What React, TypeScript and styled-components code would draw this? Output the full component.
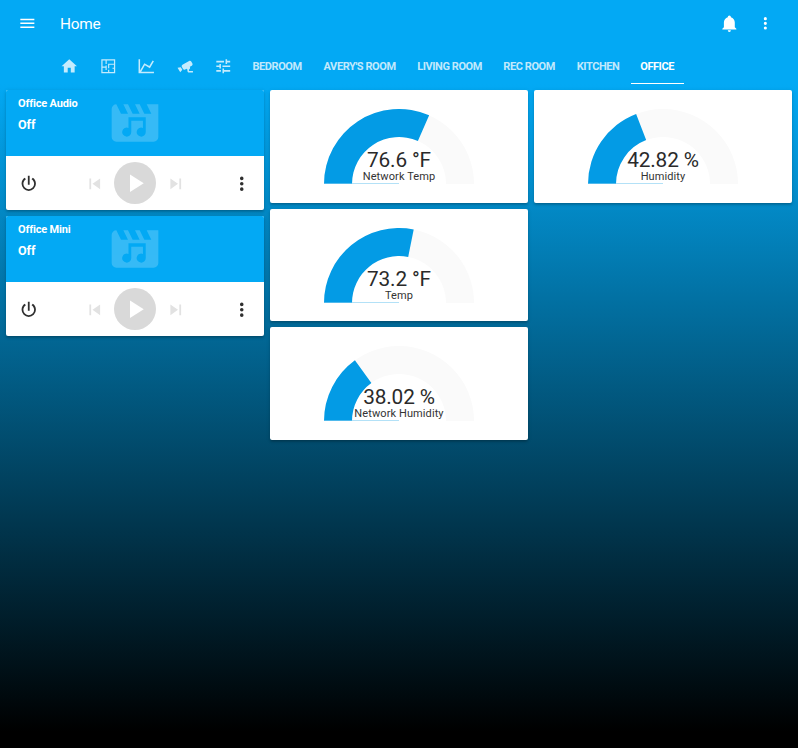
import React from "react";
import styled, { createGlobalStyle } from "styled-components";

const GlobalStyle = createGlobalStyle`
  * { box-sizing: border-box; }
  html, body { margin: 0; height: 100%; }
  body { font-family: Roboto, "Liberation Sans", sans-serif; overflow: hidden; background: #03a9f4; }
  button { border: 0; padding: 0; background: none; font: inherit; color: inherit; }
`;

const icons = {
  menu: "M3,6H21V8H3V6M3,11H21V13H3V11M3,16H21V18H3V16Z",
  bell: "M21,19V20H3V19L5,17V11C5,7.9 7.03,5.17 10,4.29C10,4.19 10,4.1 10,4A2,2 0 0,1 12,2A2,2 0 0,1 14,4C14,4.1 14,4.19 14,4.29C16.97,5.17 19,7.9 19,11V17L21,19M14,21A2,2 0 0,1 12,23A2,2 0 0,1 10,21",
  dots: "M12,16A2,2 0 0,1 14,18A2,2 0 0,1 12,20A2,2 0 0,1 10,18A2,2 0 0,1 12,16M12,10A2,2 0 0,1 14,12A2,2 0 0,1 12,14A2,2 0 0,1 10,12A2,2 0 0,1 12,10M12,4A2,2 0 0,1 14,6A2,2 0 0,1 12,8A2,2 0 0,1 10,6A2,2 0 0,1 12,4Z",
  home: "M10,20V14H14V20H19V12H22L12,3L2,12H5V20H10Z",
  floorPlan: "M3,3H21V21H3V3M4.6,4.6V12.4H8.5V11H10V17H8.5V14H4.6V19.4H11.8V16.5H13.3V19.4H19.4V15.4H17.5V13.9H19.4V10.2H13.3V14.5H11.8V8.7H19.4V4.6H10V9H8.5V4.6H4.6Z",
  chart: "M16,11.78L20.24,4.45L21.97,5.45L16.74,14.5L10.23,10.75L5.46,19H22V21H2V3H4V17.54L9.5,8L16,11.78Z",
  cctv: "M18.15,4.94C17.77,4.91 17.37,5 17,5.2L8.35,10.2C7.39,10.76 7.07,12 7.62,12.94L9.12,15.53C9.67,16.5 10.89,16.82 11.85,16.27L13.65,15.23C13.92,15.69 14.32,16.06 14.81,16.27V18.04C14.81,19.13 15.7,20 16.81,20H22V18.04H16.81V16.27C17.72,15.87 18.31,14.97 18.31,14C18.31,13.54 18.19,13.11 17.97,12.73L20.5,11.27C21.47,10.71 21.8,9.5 21.24,8.53L19.74,5.94C19.4,5.34 18.79,5 18.15,4.94M6.22,13.17L2,13.87L2.75,15.17L4.75,18.63L5.5,19.93L8.22,16.63L6.22,13.17Z",
  tune: "M3,17V19H9V17H3M3,5V7H13V5H3M13,21V19H21V17H13V15H11V21H13M7,9V11H3V13H7V15H9V9H7M21,13V11H11V13H21M15,9H17V7H21V5H17V3H15V9Z",
  power: "M16.56,5.44L15.11,6.89C16.84,7.94 18,9.83 18,12A6,6 0 0,1 12,18A6,6 0 0,1 6,12C6,9.83 7.16,7.94 8.88,6.88L7.44,5.44C5.36,6.88 4,9.28 4,12A8,8 0 0,0 12,20A8,8 0 0,0 20,12C20,9.28 18.64,6.88 16.56,5.44M13,3H11V13H13",
  previous: "M6,18V6H8V18H6M9.5,12L18,6V18L9.5,12Z",
  next: "M16,18H18V6H16M6,18L14.5,12L6,6V18Z",
  play: "M8,5.14V19.14L19,12.14L8,5.14Z",
  movieMusic:
    "M4,4L6,8H9L7,4H9L11,8H14L12,4H14L16,8H19L17,4H22V18A2,2 0 0,1 20,20H4A2,2 0 0,1 2,18V6A2,2 0 0,1 4,4Z" +
    "M9.2,9.5V14.1A1.95,1.95 0 1,0 10.4,15.9V11H15.4V14.1A1.95,1.95 0 1,0 16.6,15.9V9.5H9.2Z",
};

const Svg = styled.svg<{ $size: number }>`
  display: block;
  flex: none;
  width: ${(p) => p.$size}px;
  height: ${(p) => p.$size}px;
  fill: currentColor;
  fill-rule: evenodd;
`;

function Icon({ name, size }: { name: keyof typeof icons; size: number }) {
  return (
    <Svg $size={size} viewBox="0 0 24 24">
      <path d={icons[name]} />
    </Svg>
  );
}

const Page = styled.div`
  height: 748px;
  display: flex;
  flex-direction: column;
`;

const Header = styled.header`
  height: 84px;
  flex: none;
  color: #fff;
  background: #03a9f4;
`;

const Toolbar = styled.div`
  height: 48px;
  display: flex;
  align-items: center;
  padding: 0 23.4px 0.4px 17.6px;
`;

const Title = styled.h1`
  flex: 1;
  margin: 0 0 0 23.6px;
  font-size: 15.4px;
  font-weight: 400;
  line-height: 20px;
  letter-spacing: -0.2px;
`;

const Actions = styled.div`
  display: flex;
  gap: 17.4px;
`;

const Tabs = styled.nav`
  height: 36px;
  display: flex;
  padding-left: 50px;
`;

const Tab = styled.button<{ $width: number; $active?: boolean }>`
  width: ${(p) => p.$width}px;
  flex: none;
  display: flex;
  align-items: center;
  justify-content: center;
  padding-top: 1.4px;
  white-space: nowrap;
  font-size: 11px;
  font-weight: 700;
  letter-spacing: -0.42px;
  border-bottom: 1px solid ${(p) => (p.$active ? "#fff" : "transparent")};
  color: ${(p) => (p.$active ? "#fff" : "rgba(255, 255, 255, 0.77)")};
`;

const RoomTab = styled(Tab)`
  padding-right: 0.8px;
`;

const View = styled.main`
  flex: 1;
  display: grid;
  grid-template-columns: repeat(3, 258px);
  gap: 6px;
  align-items: start;
  padding: 6px;
  background: linear-gradient(to bottom, #03a9f4, #000 97.5%);
`;

const Column = styled.div`
  display: flex;
  flex-direction: column;
  gap: 6px;
`;

const Card = styled.section`
  background: #fff;
  border-radius: 2px;
  overflow: hidden;
  box-shadow: 0 2px 2px rgba(0, 0, 0, 0.14), 0 1px 4px rgba(0, 0, 0, 0.12), 0 2px 1px -2px rgba(0, 0, 0, 0.2);
`;

const MediaBanner = styled.div`
  height: 66px;
  display: grid;
  grid-template-columns: 1fr 56px 1fr;
  background: #03a9f4;
  color: #fff;
`;

const MediaText = styled.div`
  padding: 6px 0 0 12px;
  font-weight: 700;
`;

const MediaName = styled.div`
  font-size: 11px;
  line-height: 16px;
  letter-spacing: -0.18px;
  white-space: nowrap;
`;

const MediaState = styled.div`
  margin-top: 4px;
  font-size: 12.5px;
  line-height: 18px;
`;

const MediaArt = styled.div`
  padding: 4.6px 0 0 0.3px;
  opacity: 0.2;
`;

const Controls = styled.div`
  height: 54px;
  display: flex;
  align-items: center;
  justify-content: space-between;
  padding: 0 12px;
  color: #303030;
`;

const ControlButton = styled.button`
  padding-top: 1.2px;
`;

const Transport = styled.div`
  display: flex;
  align-items: center;
  gap: 9px;
  color: #e2e2e2;
`;

const PlayButton = styled.button`
  width: 42px;
  height: 42px;
  display: grid;
  place-items: center;
  border-radius: 50%;
  background: #d9d9d9;
  color: #fff;
`;

const GaugeCard = styled(Card)`
  height: 112.6px;
  display: flex;
  flex-direction: column;
  align-items: center;
  padding-top: 18.95px;
`;

const Dial = styled.svg`
  display: block;
  flex: none;
  width: 150px;
  height: 75px;
`;

const Reading = styled.div`
  margin-top: -33.9px;
  text-align: center;
  color: #2a2a2a;
`;

const Value = styled.div`
  font-size: 20.8px;
  font-weight: 400;
  line-height: 20px;
  letter-spacing: -0.15px;
`;

const Label = styled.div`
  font-size: 11px;
  line-height: 14px;
  letter-spacing: 0.1px;
  color: #333;
`;

function arc(degrees: number) {
  const t = (degrees * Math.PI) / 180;
  const c = Math.cos(t);
  const s = Math.sin(t);
  return `M0,75A75,75 0 0,1 ${75 - 75 * c},${75 - 75 * s}L${75 - 47 * c},${75 - 47 * s}A47,47 0 0,0 28,75Z`;
}

function Gauge({ value, label, degrees }: { value: string; label: string; degrees: number }) {
  return (
    <GaugeCard>
      <Dial viewBox="0 0 150 75">
        <path d={arc(180)} fill="#fafafa" />
        <path d={arc(degrees)} fill="#039be5" />
        <rect x="0" y="74" width="75" height="1" fill="#b3e1f7" />
        <rect x="0" y="74" width="28" height="1" fill="#4fb9ec" />
      </Dial>
      <Reading>
        <Value>{value}</Value>
        <Label>{label}</Label>
      </Reading>
    </GaugeCard>
  );
}

function MediaPlayer({ name }: { name: string }) {
  return (
    <Card>
      <MediaBanner>
        <MediaText>
          <MediaName>{name}</MediaName>
          <MediaState>Off</MediaState>
        </MediaText>
        <MediaArt><Icon name="movieMusic" size={56} /></MediaArt>
      </MediaBanner>
      <Controls>
        <ControlButton aria-label="Power"><Icon name="power" size={21.5} /></ControlButton>
        <Transport>
          <ControlButton aria-label="Previous"><Icon name="previous" size={21.5} /></ControlButton>
          <PlayButton aria-label="Play"><Icon name="play" size={30} /></PlayButton>
          <ControlButton aria-label="Next"><Icon name="next" size={21.5} /></ControlButton>
        </Transport>
        <ControlButton aria-label="More"><Icon name="dots" size={21.5} /></ControlButton>
      </Controls>
    </Card>
  );
}

const iconTabs = [
  { icon: "home", width: 38 },
  { icon: "floorPlan", width: 40 },
  { icon: "chart", width: 37 },
  { icon: "cctv", width: 40 },
  { icon: "tune", width: 37 },
] as const;

const roomTabs = [
  { label: "BEDROOM", width: 71 },
  { label: "AVERY'S ROOM", width: 94 },
  { label: "LIVING ROOM", width: 86 },
  { label: "REC ROOM", width: 73 },
  { label: "KITCHEN", width: 65 },
  { label: "OFFICE", width: 53 },
];

export default function App() {
  return (
    <>
      <GlobalStyle />
      <Page>
        <Header>
          <Toolbar>
            <Icon name="menu" size={18.7} />
            <Title>Home</Title>
            <Actions>
              <Icon name="bell" size={18.7} />
              <Icon name="dots" size={18.7} />
            </Actions>
          </Toolbar>
          <Tabs>
            {iconTabs.map((t) => (
              <Tab key={t.icon} $width={t.width}><Icon name={t.icon} size={18.5} /></Tab>
            ))}
            {roomTabs.map((t) => (
              <RoomTab key={t.label} $width={t.width} $active={t.label === "OFFICE"}>{t.label}</RoomTab>
            ))}
          </Tabs>
        </Header>
        <View>
          <Column>
            <MediaPlayer name="Office Audio" />
            <MediaPlayer name="Office Mini" />
          </Column>
          <Column>
            <Gauge value="76.6 °F" label="Network Temp" degrees={113.7} />
            <Gauge value="73.2 °F" label="Temp" degrees={101.3} />
            <Gauge value="38.02 %" label="Network Humidity" degrees={54} />
          </Column>
          <Column>
            <Gauge value="42.82 %" label="Humidity" degrees={69} />
          </Column>
        </View>
      </Page>
    </>
  );
}
